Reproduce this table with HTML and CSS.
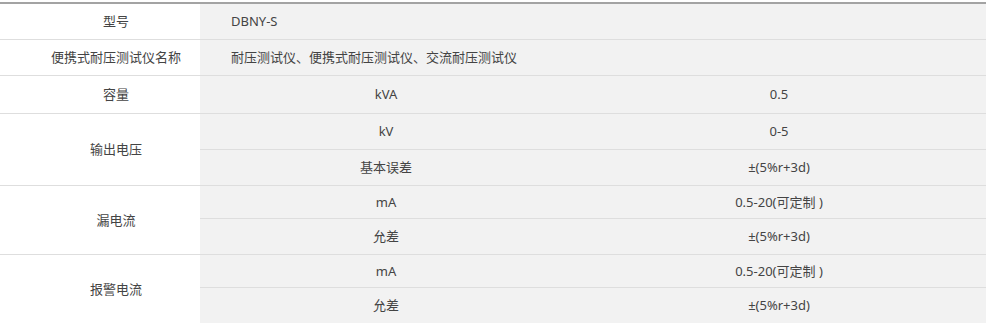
FILE: index.html
```html
<!DOCTYPE html>
<html lang="zh-CN">
<head>
<meta charset="utf-8">
<title>DBNY-S 参数</title>
<link rel="stylesheet" href="styles.css">
</head>
<body>
<div class="spec">
  <div class="c key r1">型号</div>
  <div class="c val span2 left r1">DBNY-S</div>

  <div class="c key r2">便携式耐压测试仪名称</div>
  <div class="c val span2 left r2">耐压测试仪、便携式耐压测试仪、交流耐压测试仪</div>

  <div class="c key r3">容量</div>
  <div class="c val r3">kVA</div>
  <div class="c val r3">0.5</div>

  <div class="c key rs45">输出电压</div>
  <div class="c val r4">kV</div>
  <div class="c val r4">0-5</div>
  <div class="c val r5">基本误差</div>
  <div class="c val r5">±(5%r+3d)</div>

  <div class="c key rs67">漏电流</div>
  <div class="c val r6">mA</div>
  <div class="c val r6">0.5-20(可定制 )</div>
  <div class="c val r7">允差</div>
  <div class="c val r7">±(5%r+3d)</div>

  <div class="c key rs89">报警电流</div>
  <div class="c val r8">mA</div>
  <div class="c val r8">0.5-20(可定制 )</div>
  <div class="c val r9">允差</div>
  <div class="c val r9">±(5%r+3d)</div>
</div>
</body>
</html>
```

FILE: styles.css
```css
html, body {
  margin: 0;
  padding: 0;
  background: #fff;
}

body {
  padding-top: 2px;
  font-family: "Noto Sans", "Noto Sans CJK SC", sans-serif;
  font-size: 13px;
  color: #444;
}

.spec {
  width: 986px;
  display: grid;
  grid-template-columns: 200px 340px 446px;
  grid-template-rows: 36px 36px 38px 36px 36px 33px 36px 33px 36px;
  border-top: 2px solid #a3a3a3;
}

.c {
  display: flex;
  align-items: center;
  justify-content: center;
  padding-left: 32px;
  border-bottom: 1px solid #dedede;
  box-sizing: border-box;
  white-space: nowrap;
  line-height: 1;
}

.key {
  grid-column: 1;
  background: #fff;
}

.val {
  background: #f2f2f2;
}

.span2 {
  grid-column: 2 / 4;
}

.left {
  justify-content: flex-start;
  padding-left: 31px;
}

.r1 { grid-row: 1; }
.r2 { grid-row: 2; }
.r3 { grid-row: 3; }
.r4 { grid-row: 4; }
.r5 { grid-row: 5; }
.r6 { grid-row: 6; }
.r7 { grid-row: 7; }
.r8 { grid-row: 8; }
.r9 { grid-row: 9; }

.rs45 { grid-row: 4 / 6; }
.rs67 { grid-row: 6 / 8; }
.rs89 { grid-row: 8 / 10; }
```
